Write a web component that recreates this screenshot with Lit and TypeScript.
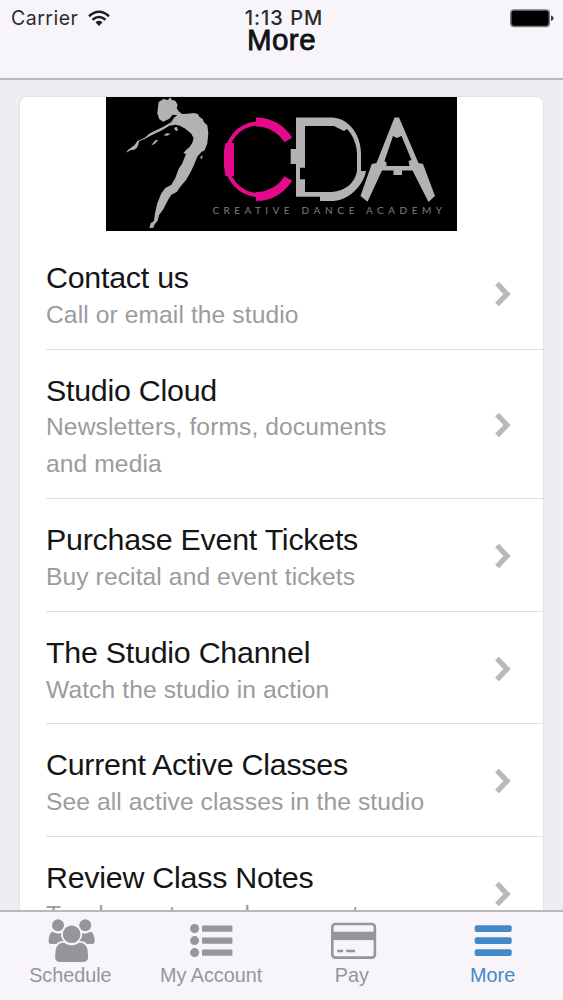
import { LitElement, html, css, svg } from 'lit';
import { customElement, property } from 'lit/decorators.js';
import { classMap } from 'lit/directives/class-map.js';

const menuItems = [
  { title: 'Contact us', detail: 'Call or email the studio' },
  { title: 'Studio Cloud', detail: 'Newsletters, forms, documents and media' },
  { title: 'Purchase Event Tickets', detail: 'Buy recital and event tickets' },
  { title: 'The Studio Channel', detail: 'Watch the studio in action' },
  { title: 'Current Active Classes', detail: 'See all active classes in the studio' },
  { title: 'Review Class Notes', detail: 'Teacher notes and comments' },
];

const tabIcons = {
  schedule: svg`
    <circle cx="11" cy="8.3" r="6" />
    <circle cx="38.2" cy="8.3" r="6" />
    <path d="M5 14.6q6 3.4 9 1.4q0 6 4 9l-5 2H4q-2.4 0-2.4-3q0-6 3.4-9.4z" />
    <path d="M44.2 14.6q-6 3.4-9 1.4q0 6-4 9l5 2h9q2.4 0 2.4-3q0-6-3.4-9.4z" />
    <path class="gap" d="M7.6 39V33q0-9 9-9h16q9 0 9 9v6q0 6-6 6h-22q-6 0-6-6z" />
    <circle class="gap" cx="24.6" cy="17.2" r="10.4" />
    <circle cx="24.6" cy="17.2" r="8.8" />
    <path d="M16.4 25.6q8.2 5.4 16.4 0q8.2 1 8.2 11.5v3.5q0 4.3-4.5 4.3H12.7q-4.5 0-4.5-4.3v-3.5q0-10.5 8.2-11.5z" />
  `,
  account: svg`
    <circle cx="6.6" cy="11.5" r="4.5" />
    <circle cx="6.6" cy="23.6" r="4.5" />
    <circle cx="6.6" cy="35.6" r="4.5" />
    <rect x="14" y="8.4" width="30.4" height="6.4" rx="1" />
    <rect x="14" y="20.4" width="30.4" height="6.4" rx="1" />
    <rect x="14" y="32.4" width="30.4" height="6.4" rx="1" />
  `,
  pay: svg`
    <rect class="line" x="3.3" y="7" width="42.6" height="33.6" rx="3" />
    <rect x="3" y="14.7" width="43" height="8.4" />
    <path class="line" d="M8.2 34h6M17.2 34h8.8" />
  `,
  more: svg`
    <rect x="4.7" y="8.2" width="37" height="6.7" rx="2" />
    <rect x="4.7" y="20.2" width="37" height="6.7" rx="2" />
    <rect x="4.7" y="32.2" width="37" height="6.7" rx="2" />
  `,
};

@customElement('studio-logo')
export class StudioLogo extends LitElement {
  static styles = css`
    :host {
      display: block;
      width: 351px;
      height: 134px;
      background: #000;
    }

    svg {
      display: block;
    }

    .silver {
      fill: #b3b1b4;
    }

    .pink {
      fill: #e5098b;
    }

    .arc {
      fill: none;
      stroke: #e5098b;
    }

    text {
      font-family: Lato, 'Liberation Sans', sans-serif;
      font-size: 10px;
      fill: #807e81;
    }
  `;

  render() {
    return html`
      <svg width="351" height="134" viewBox="0 0 351 134">
        <g class="silver" transform="translate(-6 -7) scale(0.3333)">
          <path d="M176 36L190 27L204 30L210 22L216 30L226 32L233 45L230 54L236 64L246 72L262 71L282 69L294 72L298 80L308 87L312 97L322 106L325 130L322 160L314 181L304 186L292 200L282 225L270 250L258 270L241 290L230 306L214 314L204 330L190 358L177 376L173 392L164 403L160 413L148 414L152 400L162 393L165 370L172 340L184 310L196 294L214 284L226 264L236 236L246 222L258 192L250 190L258 180L268 172L277 158L281 145L274 131L256 116L240 107L226 104L208 107L186 121L150 138L134 147L118 153L112 172L102 180L94 179L78 188L84 180L104 165L112 153L134 143L150 130L190 110L214 96L222 83L232 76L218 74L208 86L190 95L178 88L172 70L174 52Z" />
          <path d="M154 166L166 151L175 150L164 162Z" />
          <path d="M190 136L200 130L212 131L202 137Z" />
          <path d="M222 114L230 110L234 120L228 124Z" />
          <path d="M300 202L308 196L306 208Z" />
        </g>

        <path class="arc" stroke-width="4" d="M151 26.400C132 28 120 43 120 62S132 96.500 151 98" />
        <path class="arc" stroke-width="9" d="M150 25A37.500 37.500 0 0 1 182.300 43M150 99.500A37.500 37.500 0 0 0 182.300 81.500" />
        <path class="pink" d="M119.500 46H128V79H119.500L118 70V54Z" />

        <path class="silver" fill-rule="evenodd" d="M190 20.500H226C240 20.500 255 35 255 57V74H260C257 90 241 104 227 104H214V99.700H190V67H184.700V52H190ZM199 29V70.700H194V82.300H199V95H226C239 94 249 86 251 74V57C251 48 247 38 241 32L238 34L228 29Z" />

        <path class="silver" d="M288.500 20.500H293L312.500 66L317 67L329 99L322.500 105L306.500 73.500H296V78H287.500V73.500H276L261.500 104.700L254.500 99L265.700 67L270.500 66ZM287 39L278.500 64L280.500 65.500V69H303.500L302.500 64L305.500 63L295.500 39L291 41Z" />

        <text x="106.500" y="117" textLength="77">CREATIVE</text>
        <text x="195.500" y="117" textLength="53">DANCE</text>
        <text x="260" y="117" textLength="76">ACADEMY</text>
      </svg>
    `;
  }
}

@customElement('menu-row')
export class MenuRow extends LitElement {
  @property() title = '';
  @property() detail = '';

  static styles = css`
    :host {
      display: flex;
      align-items: center;
      justify-content: space-between;
      margin-left: 26px;
      padding: 22px 31px 15.8px 0;
      border-bottom: 1.5px solid #dedddf;
    }

    .text {
      width: 380px;
    }

    .title {
      font-size: 30.4px;
      line-height: 36.8px;
      letter-spacing: -0.25px;
      color: #151515;
      white-space: nowrap;
    }

    .detail {
      font-size: 24.6px;
      line-height: 37px;
      letter-spacing: 0.1px;
      color: #9c9b9d;
    }

    .chevron {
      display: block;
      margin-top: -4px;
      fill: none;
      stroke: #b9b8ba;
      stroke-width: 5.4;
    }
  `;

  render() {
    return html`
      <div class="text">
        <div class="title">${this.title}</div>
        <div class="detail">${this.detail}</div>
      </div>
      <svg class="chevron" width="18" height="28" viewBox="0 0 18 28">
        <path d="M3 3.500L13 14L3 24.500" />
      </svg>
    `;
  }
}

@customElement('app-root')
export class AppRoot extends LitElement {
  static styles = css`
    :host {
      display: flex;
      flex-direction: column;
      width: 563px;
      height: 1000px;
      overflow: hidden;
      background: #efedf1;
      font-family: 'Liberation Sans', Arial, sans-serif;
    }

    .header {
      flex: none;
      box-sizing: border-box;
      height: 80px;
      padding-top: 8px;
      background: #f7f5f9;
      border-bottom: 2px solid #b9b7bb;
    }

    .status {
      display: grid;
      grid-template-columns: 1fr auto 1fr;
      align-items: center;
      height: 20px;
      padding: 0 9px 0 11px;
      font-family: Inter, Roboto, sans-serif;
      font-size: 19.5px;
      line-height: 20px;
      color: #2c2b2d;
    }

    .carrier {
      display: flex;
      align-items: center;
      gap: 10px;
      letter-spacing: 0.5px;
    }

    .clock {
      font-weight: 500;
      font-size: 20px;
      letter-spacing: 1px;
      margin-left: 3px;
    }

    .battery {
      justify-self: end;
    }

    .heading {
      margin: 0;
      font-size: 29.5px;
      font-weight: 400;
      line-height: 24px;
      text-align: center;
      letter-spacing: 0.5px;
      color: #111;
      -webkit-text-stroke: 0.8px #111;
    }

    .content {
      flex: 1;
      min-height: 0;
      overflow: hidden;
      padding: 16px 19px 0;
    }

    .card {
      background: #fff;
      border: 1px solid #e4e2e6;
      border-bottom: 0;
      border-radius: 8px 8px 0 0;
    }

    .card studio-logo {
      margin: 0 auto 6px;
    }

    .tabs {
      flex: none;
      display: grid;
      grid-template-columns: repeat(4, 1fr);
      box-sizing: border-box;
      height: 90px;
      padding-top: 5px;
      background: #f7f5f9;
      border-top: 2px solid #b9b7bb;
    }

    .tab {
      display: flex;
      flex-direction: column;
      align-items: center;
      font-size: 19.8px;
      line-height: 25px;
      color: #979599;
      fill: currentColor;
    }

    .tab.active {
      color: #4489c8;
    }

    .tab .gap {
      fill: #f7f5f9;
    }

    .tab .line {
      fill: none;
      stroke: currentColor;
      stroke-width: 2.6;
    }
  `;

  tabs = [
    { label: 'Schedule', icon: tabIcons.schedule },
    { label: 'My Account', icon: tabIcons.account },
    { label: 'Pay', icon: tabIcons.pay },
    { label: 'More', icon: tabIcons.more, active: true },
  ];

  render() {
    return html`
      <header class="header">
        <div class="status">
          <span class="carrier">
            Carrier
            <svg width="22" height="17" viewBox="0 0 22 17">
              <g fill="none" stroke="#1c1b1d" stroke-width="2.500">
                <path d="M1 6.200Q11-2.600 21 6.200" />
                <path d="M4.500 9.800Q11 4.200 17.500 9.800" />
              </g>
              <path fill="#1c1b1d" d="M7.500 12.200Q11 9.300 14.500 12.200L11 16Z" />
            </svg>
          </span>
          <span class="clock">1:13 PM</span>
          <svg class="battery" width="44" height="19" viewBox="0 0 44 19">
            <rect x="0.800" y="1" width="38.500" height="16.500" rx="3.200" fill="#000" stroke="#7b797d" stroke-width="1.500" />
            <path fill="#3a393b" d="M41 6.500Q43.500 7 43.500 9.200T41 12Z" />
          </svg>
        </div>
        <h1 class="heading">More</h1>
      </header>
      <main class="content">
        <div class="card">
          <studio-logo></studio-logo>
          ${menuItems.map(item => html`
            <menu-row .title=${item.title} .detail=${item.detail}></menu-row>
          `)}
        </div>
      </main>
      <nav class="tabs">
        ${this.tabs.map(tab => html`
          <div class=${classMap({ tab: true, active: !!tab.active })}>
            <svg width="46" height="46" viewBox="0 0 46 46" overflow="visible">${tab.icon}</svg>
            <span>${tab.label}</span>
          </div>
        `)}
      </nav>
    `;
  }
}
